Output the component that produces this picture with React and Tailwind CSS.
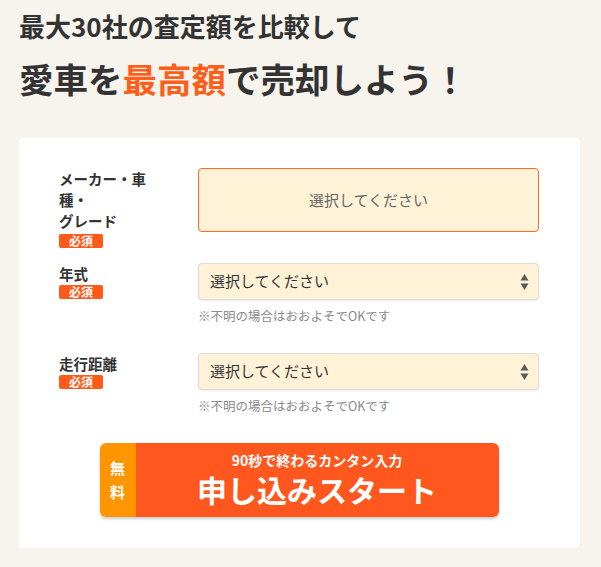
const jp = { fontFamily: '"Noto Sans CJK JP", "Noto Sans", sans-serif' }

function Badge() {
  return (
    <span className="mt-px flex h-[14px] w-[44px] items-center justify-center rounded-[2px] bg-[#ff5a1a] text-[12px] font-bold leading-none text-white">
      必須
    </span>
  )
}

function Arrows() {
  return (
    <svg width="9" height="18" viewBox="0 0 9 18" className="shrink-0">
      <path d="M4.5 1 L8.5 7.5 L0.5 7.5 Z" fill="#5a5a5a" />
      <path d="M4.5 17 L8.5 10.5 L0.5 10.5 Z" fill="#5a5a5a" />
    </svg>
  )
}

function Row({ label, children }) {
  return (
    <div className="flex">
      <div className="mr-[39px] w-[100px] shrink-0">
        <div className="text-[14.5px] font-bold leading-[21px] text-[#333]">{label}</div>
        <Badge />
      </div>
      <div className="flex-1">{children}</div>
    </div>
  )
}

function Select() {
  return (
    <div>
      <div className="flex h-[37px] items-center justify-between rounded-[4px] border border-[#dcdcdc] bg-[#fff2d7] pl-[11px] pr-[9px] shadow-[0_1px_2px_rgba(0,0,0,0.08)]">
        <span className="text-[15px] text-[#333]">選択してください</span>
        <Arrows />
      </div>
      <p className="mt-2 h-4 text-[12.5px] leading-4 text-[#8a8a8a]">※不明の場合はおおよそでOKです</p>
    </div>
  )
}

export default function App() {
  return (
    <div className="min-h-[567px] bg-[#f7f4ee] pl-[19px] pr-[21px] pt-[8px] pb-[19px]" style={jp}>
      <h2 className="text-[26px] font-bold leading-[36px] text-[#333]">最大30社の査定額を比較して</h2>
      <h1 className="mt-[12px] whitespace-nowrap text-[34.5px] font-bold leading-[44px] text-[#333]">
        愛車を<span className="text-[#ff5f1a]">最高額</span>で売却しよう！
      </h1>

      <div className="mt-[38px] rounded-[4px] bg-white pl-[40px] pr-[41px] pt-[30px] pb-[31px]">
        <Row
          label={
            <span className="block pb-[2px]">
              メーカー・車
              <br />
              種・
              <br />
              グレード
            </span>
          }
        >
          <div className="flex h-[64px] items-center justify-center rounded-[4px] border border-[#ff6a1f] bg-[#fff2d7]">
            <span className="text-[15px] text-[#666]">選択してください</span>
          </div>
        </Row>

        <div className="mt-[15px]">
          <Row label="年式">
            <Select />
          </Row>
        </div>

        <div className="mt-[29px]">
          <Row label="走行距離">
            <Select />
          </Row>
        </div>

        <div className="mt-[29px] flex justify-center">
          <button className="flex h-[74px] w-[399px] overflow-hidden rounded-[6px] shadow-[0_2px_3px_rgba(0,0,0,0.2)]">
            <span className="flex w-[36px] flex-col items-center justify-center bg-[#ff9500] text-[15px] font-bold leading-[24px] text-white">
              <span>無</span>
              <span>料</span>
            </span>
            <span className="flex flex-1 flex-col items-center justify-center bg-[#ff571d] pb-[3px] text-white">
              <span className="text-[14px] font-bold leading-[17px]">90秒で終わるカンタン入力</span>
              <span className="mt-[4px] text-[30px] font-bold leading-[32px]">申し込みスタート</span>
            </span>
          </button>
        </div>
      </div>
    </div>
  )
}
